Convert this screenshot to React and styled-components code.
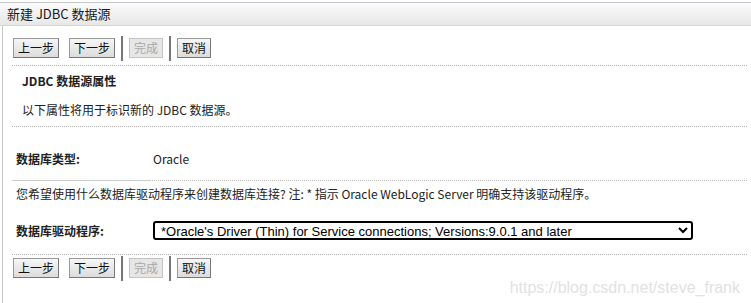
import styled, { createGlobalStyle } from "styled-components";

const GlobalStyle = createGlobalStyle`
  body {
    margin: 0;
    background: #fff;
    font-family: "Noto Sans CJK SC", "Noto Sans", sans-serif;
    font-size: 12px;
    color: #222;
  }
`;

const steps = ["上一步", "下一步", "|", "完成", "|", "取消"];

export default function App() {
  return (
    <Page>
      <GlobalStyle />
      <Header>新建 JDBC 数据源</Header>
      <Panel>
        <ButtonBar />
        <Dotted />
        <Section>
          <SectionTitle>JDBC 数据源属性</SectionTitle>
          <SectionText>以下属性将用于标识新的 JDBC 数据源。</SectionText>
        </Section>
        <Dotted />
        <Row $top={22}>
          <Label>数据库类型:</Label>
          <Value>Oracle</Value>
        </Row>
        <RowLine />
        <Note>
          您希望使用什么数据库驱动程序来创建数据库连接? 注: * 指示 Oracle WebLogic Server 明确支持该驱动程序。
        </Note>
        <Row $top={18}>
          <Label>数据库驱动程序:</Label>
          <Select defaultValue="thin">
            <option value="thin">
              *Oracle's Driver (Thin) for Service connections; Versions:9.0.1 and later
            </option>
          </Select>
        </Row>
        <Dotted $top={14} />
        <ButtonBar />
      </Panel>
      <Watermark>https://blog.csdn.net/steve_frank</Watermark>
    </Page>
  );
}

function ButtonBar() {
  return (
    <Bar>
      {steps.map((s, i) =>
        s === "|" ? (
          <Sep key={i} />
        ) : (
          <Btn key={i} disabled={s === "完成"} $first={i === 0}>
            {s}
          </Btn>
        )
      )}
    </Bar>
  );
}

const Page = styled.div`
  position: relative;
  width: 751px;
  height: 303px;
  padding-top: 2px;
  box-sizing: border-box;
  overflow: hidden;
`;

const Header = styled.div`
  height: 22px;
  border-top: 1px solid #c4c8cc;
  border-bottom: 1px solid #d4d6d4;
  background: linear-gradient(#fbfbfb, #e6e7e6);
  padding-left: 7px;
  font-size: 13px;
  line-height: 22px;
  color: #1a1a1a;
`;

const Panel = styled.div`
  margin-left: 2px;
  border-left: 1px solid #c8c8c8;
  padding: 9px 4px 30px 9px;
`;

const Bar = styled.div`
  display: flex;
  align-items: center;
  gap: 6px;
  padding-left: 1px;
  height: 26px;
`;

const Btn = styled.button`
  height: 20px;
  padding: 0 4px;
  margin-right: ${(p) => (p.$first ? 4 : 0)}px;
  font-family: "Noto Sans CJK SC", sans-serif;
  font-size: 12px;
  line-height: 18px;
  color: ${(p) => (p.disabled ? "#a8a8a8" : "#111")};
  background: ${(p) =>
    p.disabled ? "#e6e6e6" : "linear-gradient(#f6f6f6, #dcdcdc)"};
  border: 1px solid ${(p) => (p.disabled ? "#c4c4c4" : "#9a9a9a")};
  border-right-color: ${(p) => (p.disabled ? "#c4c4c4" : "#777")};
  border-bottom-color: ${(p) => (p.disabled ? "#c4c4c4" : "#777")};
  border-radius: 0;
`;

const Sep = styled.span`
  width: 2px;
  height: 25px;
  background: #777;
`;

const Dotted = styled.div`
  margin-top: ${(p) => p.$top || 4}px;
  border-top: 1px dotted #b4b4b4;
`;

const Section = styled.div`
  padding: 6px 0 3px 10px;
`;

const SectionTitle = styled.div`
  font-weight: bold;
  line-height: 18px;
`;

const SectionText = styled.div`
  margin-top: 11px;
  line-height: 18px;
`;

const Row = styled.div`
  display: flex;
  align-items: center;
  margin-top: ${(p) => p.$top}px;
  padding-left: 4px;
  height: 19px;
`;

const Label = styled.div`
  width: 137px;
  font-weight: bold;
`;

const Value = styled.div`
  font-size: 12px;
`;

const RowLine = styled.div`
  margin-top: 12px;
  height: 0;
  border-top: 1px dotted #bbb;
  position: relative;
  &::before {
    content: "";
    position: absolute;
    left: 0;
    top: -1px;
    width: 138px;
    border-top: 1px solid #ccc;
  }
`;

const Note = styled.div`
  margin-top: 4px;
  padding-left: 4px;
  line-height: 18px;
`;

const Select = styled.select`
  width: 540px;
  height: 19px;
  padding: 0 2px;
  font-family: "Liberation Sans", Arial, sans-serif;
  font-size: 13px;
  color: #000;
  background: #fff;
  border: 2px solid #000;
  border-radius: 3px;
`;

const Watermark = styled.div`
  position: absolute;
  right: 11px;
  bottom: 6px;
  font-family: "Liberation Sans", Arial, sans-serif;
  font-size: 16px;
  color: #e2e2e2;
`;
